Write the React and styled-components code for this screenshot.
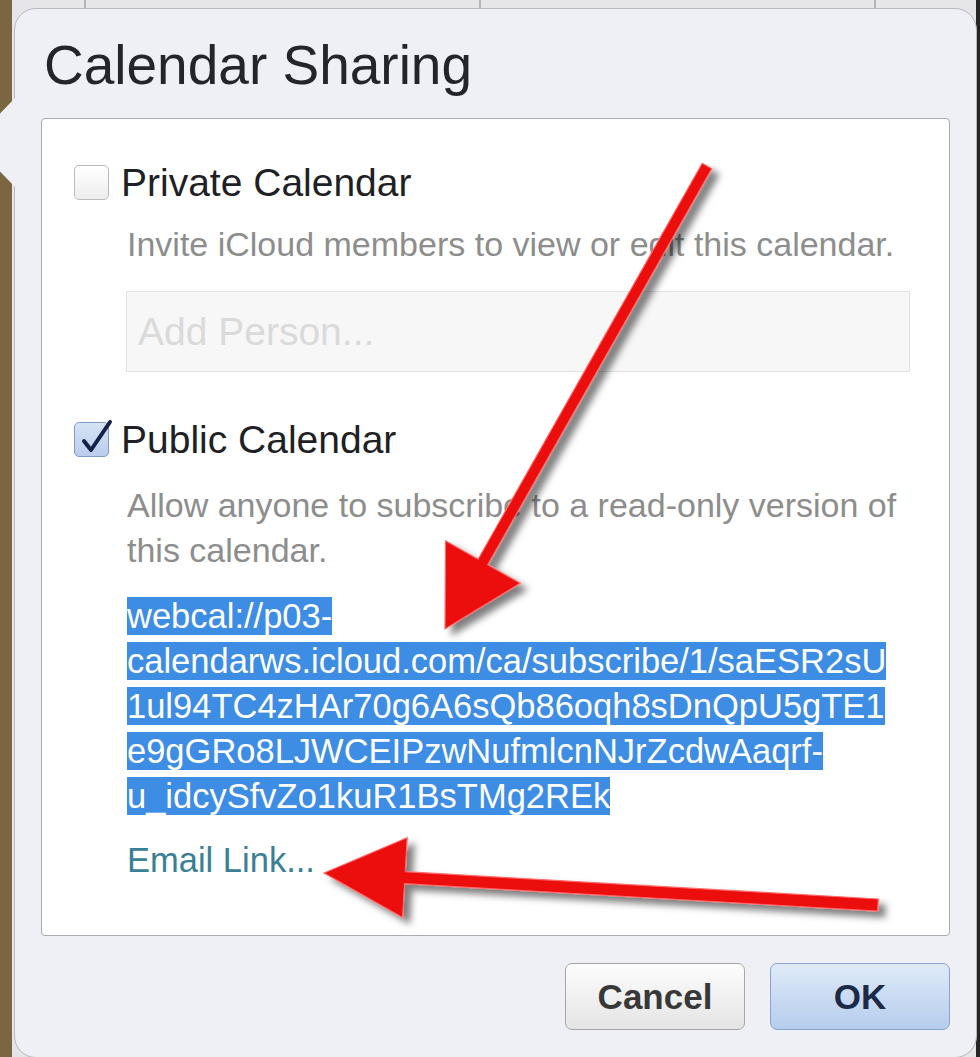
import styled, { createGlobalStyle } from "styled-components";

const GlobalStyle = createGlobalStyle`
  html, body {
    margin: 0;
    padding: 0;
    overflow: hidden;
  }
  body {
    font-family: "Liberation Sans", Arial, sans-serif;
  }
`;

const Page = styled.div`
  position: relative;
  width: 980px;
  height: 1057px;
  box-sizing: border-box;
  padding: 8px 0 0 14px;
  overflow: hidden;
  background:
    linear-gradient(90deg, #7a6741 0 12px, transparent 12px),
    linear-gradient(
        90deg,
        transparent 84px,
        #b4b4b8 84px 86px,
        transparent 86px 479px,
        #b4b4b8 479px 481px,
        transparent 481px 874px,
        #b4b4b8 874px 876px,
        transparent 876px
      )
      0 0 / 100% 10px no-repeat,
    linear-gradient(90deg, #e6e6e8 0 976px, #262626 976px);
`;

const Dialog = styled.div`
  position: relative;
  width: 963px;
  height: 1050px;
  box-sizing: border-box;
  display: flex;
  flex-direction: column;
  padding: 26px 26px 0;
  background: #eff0f6;
  border: 1px solid #b7b8c0;
  border-radius: 22px;
`;

const Pointer = styled.div`
  position: absolute;
  left: -15px;
  top: 88px;
  width: 16px;
  height: 91px;
  background: #eff0f6;
  clip-path: polygon(100% 0, 0 18%, 0 82%, 100% 100%);
`;

const Title = styled.h1`
  margin: 0;
  padding-left: 3px;
  font-size: 55px;
  line-height: 60px;
  font-weight: 400;
  color: #24242c;
`;

const Panel = styled.div`
  margin-top: 23px;
  height: 818px;
  box-sizing: border-box;
  padding: 41px 0 0 32px;
  background: #fff;
  border: 1px solid #a9aab2;
  border-radius: 4px;
`;

const Section = styled.div`
  margin-top: ${(p) => p.$gap || 0}px;
`;

const OptionRow = styled.label`
  display: flex;
  align-items: center;
  gap: 12px;
  height: 45px;
`;

const Box = styled.span`
  position: relative;
  width: 35px;
  height: 35px;
  box-sizing: border-box;
  border-radius: 5px;
  border: 1.5px solid ${(p) => (p.$checked ? "#7f9cc6" : "#bbbbbb")};
  background: ${(p) =>
    p.$checked
      ? "linear-gradient(#d6e3f5, #b9cdec)"
      : "linear-gradient(#ffffff, #ededed)"};

  svg {
    position: absolute;
    left: 0;
    top: 0;
    overflow: visible;
  }
`;

const OptionLabel = styled.span`
  font-size: 39px;
  line-height: 45px;
  color: #1f1f26;
`;

const Body = styled.div`
  margin-left: 53px;
`;

const Hint = styled.p`
  margin: ${(p) => p.$gap}px 0 0;
  max-width: 790px;
  font-size: 34px;
  line-height: 45px;
  color: #8d8d8d;
`;

const PersonInput = styled.input`
  display: block;
  margin: 24px 0 0 -1px;
  width: 784px;
  height: 81px;
  box-sizing: border-box;
  padding: 0 11px;
  border: 1px solid #e2e2e2;
  background: #f7f7f7;
  font-family: "Liberation Sans", Arial, sans-serif;
  font-size: 39px;
  color: #333;
  outline: none;

  &::placeholder {
    color: #dadada;
  }
`;

const Url = styled.div`
  margin-top: 21px;
  font-size: 34.5px;
  line-height: 45px;
  white-space: nowrap;
  color: #fff;
`;

const Selected = styled.span`
  background: #3d8de5;
`;

const EmailLink = styled.a`
  display: block;
  margin-top: 19px;
  font-size: 34.5px;
  line-height: 45px;
  color: #3a7f95;
  text-decoration: none;
`;

const Buttons = styled.div`
  display: flex;
  justify-content: flex-end;
  gap: 25px;
  margin-top: 27px;
`;

const Button = styled.button`
  width: 180px;
  height: 67px;
  box-sizing: border-box;
  border-radius: 7px;
  border: 1.5px solid ${(p) => (p.$primary ? "#87a5cf" : "#a6a6a6")};
  background: ${(p) =>
    p.$primary
      ? "linear-gradient(#dfeaf8, #b5cded)"
      : "linear-gradient(#fdfdfd, #e4e4e4)"};
  font-family: "Liberation Sans", Arial, sans-serif;
  font-size: 35px;
  font-weight: 700;
  color: ${(p) => (p.$primary ? "#1c2a47" : "#383838")};
`;

const Overlay = styled.svg`
  position: absolute;
  left: 0;
  top: 0;
  width: 980px;
  height: 1057px;
  pointer-events: none;
`;

function Checkbox({ checked }) {
  return (
    <Box $checked={checked}>
      {checked && (
        <svg width="35" height="35" viewBox="0 0 35 35">
          <path
            d="M9 18 L16 27 L35 -1"
            fill="none"
            stroke="#14214a"
            strokeWidth="4"
            strokeLinecap="round"
            strokeLinejoin="round"
          />
        </svg>
      )}
    </Box>
  );
}

// builds an arrow outline from tail to tip
function arrowPoints(tail, tip, shaft, headLen, headHalf) {
  const dx = tip[0] - tail[0];
  const dy = tip[1] - tail[1];
  const len = Math.hypot(dx, dy);
  const ux = dx / len;
  const uy = dy / len;
  const nx = -uy;
  const ny = ux;
  const bx = tip[0] - ux * headLen;
  const by = tip[1] - uy * headLen;
  const s = shaft / 2;
  const pts = [
    [tail[0] + nx * s, tail[1] + ny * s],
    [bx + nx * s, by + ny * s],
    [bx + nx * headHalf, by + ny * headHalf],
    tip,
    [bx - nx * headHalf, by - ny * headHalf],
    [bx - nx * s, by - ny * s],
    [tail[0] - nx * s, tail[1] - ny * s],
  ];
  return pts.map((p) => p.map((v) => v.toFixed(1)).join(",")).join(" ");
}

function Arrows() {
  return (
    <Overlay viewBox="0 0 980 1057">
      <defs>
        <filter id="arrowShadow" x="-20%" y="-20%" width="140%" height="140%">
          <feDropShadow dx="7" dy="6" stdDeviation="3.5" floodColor="#000" floodOpacity="0.5" />
        </filter>
      </defs>
      <g filter="url(#arrowShadow)" fill="#ec0b0b" stroke="#ff6a6a" strokeWidth="1.2">
        <polygon points={arrowPoints([707, 166], [445, 629], 11, 77, 43)} />
        <polygon points={arrowPoints([878, 905], [324, 873], 12, 81, 40)} />
      </g>
    </Overlay>
  );
}

export default function App() {
  return (
    <>
      <GlobalStyle />
      <Page>
        <Dialog>
          <Pointer />
          <Title>Calendar Sharing</Title>
          <Panel>
            <Section>
              <OptionRow>
                <Checkbox />
                <OptionLabel>Private Calendar</OptionLabel>
              </OptionRow>
              <Body>
                <Hint $gap={17}>Invite iCloud members to view or edit this calendar.</Hint>
                <PersonInput placeholder="Add Person..." readOnly />
              </Body>
            </Section>
            <Section $gap={45}>
              <OptionRow>
                <Checkbox checked />
                <OptionLabel>Public Calendar</OptionLabel>
              </OptionRow>
              <Body>
                <Hint $gap={21}>
                  Allow anyone to subscribe to a read-only version of this calendar.
                </Hint>
                <Url>
                  <Selected>webcal://p03-</Selected>
                  <br />
                  <Selected>calendarws.icloud.com/ca/subscribe/1/saESR2sU</Selected>
                  <br />
                  <Selected>1ul94TC4zHAr70g6A6sQb86oqh8sDnQpU5gTE1</Selected>
                  <br />
                  <Selected>e9gGRo8LJWCEIPzwNufmlcnNJrZcdwAaqrf-</Selected>
                  <br />
                  <Selected>u_idcySfvZo1kuR1BsTMg2REk</Selected>
                </Url>
                <EmailLink href="#">Email Link...</EmailLink>
              </Body>
            </Section>
          </Panel>
          <Buttons>
            <Button>Cancel</Button>
            <Button $primary>OK</Button>
          </Buttons>
        </Dialog>
        <Arrows />
      </Page>
    </>
  );
}
